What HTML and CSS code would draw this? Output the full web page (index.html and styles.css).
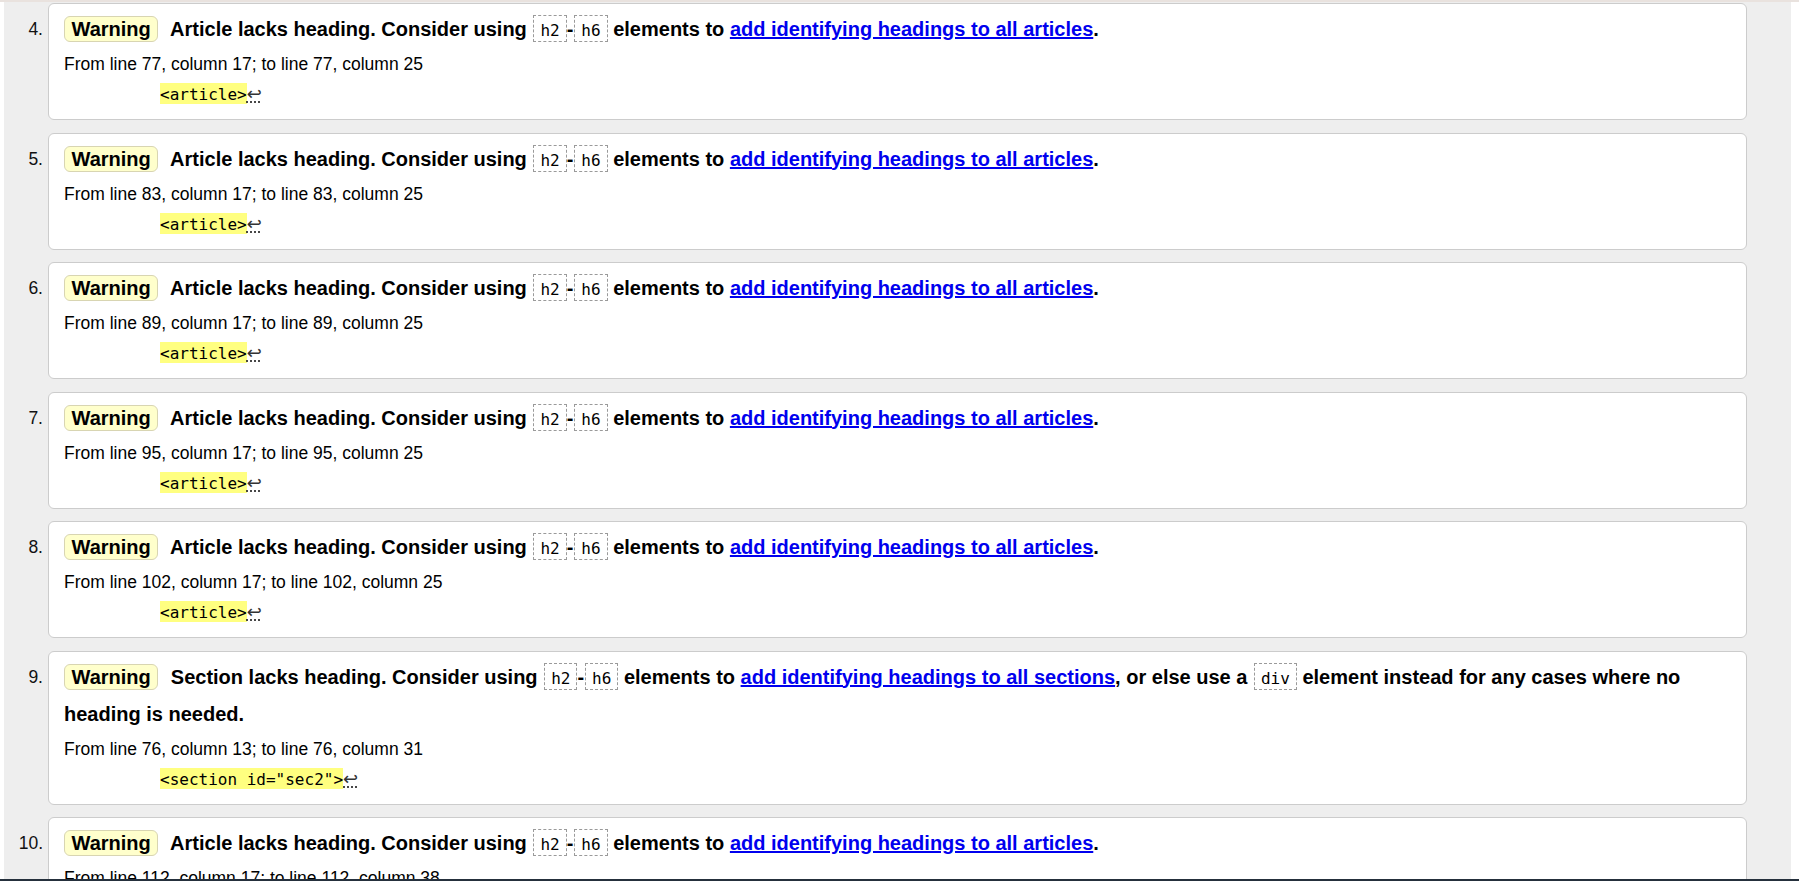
FILE: index.html
```html
<!DOCTYPE html>
<html lang="en">
<head>
<meta charset="utf-8">
<title>Validation results</title>
<link rel="stylesheet" href="styles.css">
</head>
<body>
<div class="topline"></div>
<div class="viewport">
  <main class="results">
    <ol class="msgs">
      <li class="msg">
        <span class="num">4.</span>
        <div class="card">
          <p class="title"><strong class="badge">Warning</strong> <span>Article lacks heading. Consider using <code class="tag">h2</code>-<code class="tag">h6</code> elements to <a href="#">add identifying headings to all articles</a>.</span></p>
          <p class="loc">From line 77, column 17; to line 77, column 25</p>
          <p class="extract"><code><mark>&lt;article&gt;</mark><span class="lf">↩</span></code></p>
        </div>
      </li>
      <li class="msg">
        <span class="num">5.</span>
        <div class="card">
          <p class="title"><strong class="badge">Warning</strong> <span>Article lacks heading. Consider using <code class="tag">h2</code>-<code class="tag">h6</code> elements to <a href="#">add identifying headings to all articles</a>.</span></p>
          <p class="loc">From line 83, column 17; to line 83, column 25</p>
          <p class="extract"><code><mark>&lt;article&gt;</mark><span class="lf">↩</span></code></p>
        </div>
      </li>
      <li class="msg">
        <span class="num">6.</span>
        <div class="card">
          <p class="title"><strong class="badge">Warning</strong> <span>Article lacks heading. Consider using <code class="tag">h2</code>-<code class="tag">h6</code> elements to <a href="#">add identifying headings to all articles</a>.</span></p>
          <p class="loc">From line 89, column 17; to line 89, column 25</p>
          <p class="extract"><code><mark>&lt;article&gt;</mark><span class="lf">↩</span></code></p>
        </div>
      </li>
      <li class="msg">
        <span class="num">7.</span>
        <div class="card">
          <p class="title"><strong class="badge">Warning</strong> <span>Article lacks heading. Consider using <code class="tag">h2</code>-<code class="tag">h6</code> elements to <a href="#">add identifying headings to all articles</a>.</span></p>
          <p class="loc">From line 95, column 17; to line 95, column 25</p>
          <p class="extract"><code><mark>&lt;article&gt;</mark><span class="lf">↩</span></code></p>
        </div>
      </li>
      <li class="msg">
        <span class="num">8.</span>
        <div class="card">
          <p class="title"><strong class="badge">Warning</strong> <span>Article lacks heading. Consider using <code class="tag">h2</code>-<code class="tag">h6</code> elements to <a href="#">add identifying headings to all articles</a>.</span></p>
          <p class="loc">From line 102, column 17; to line 102, column 25</p>
          <p class="extract"><code><mark>&lt;article&gt;</mark><span class="lf">↩</span></code></p>
        </div>
      </li>
      <li class="msg">
        <span class="num">9.</span>
        <div class="card">
          <p class="title"><strong class="badge">Warning</strong> <span>Section lacks heading. Consider using <code class="tag">h2</code>-<code class="tag">h6</code> elements to <a href="#">add identifying headings to all sections</a>, or else use a <code class="tag">div</code> element instead for any cases where no heading is needed.</span></p>
          <p class="loc">From line 76, column 13; to line 76, column 31</p>
          <p class="extract"><code><mark>&lt;section id="sec2"&gt;</mark><span class="lf">↩</span></code></p>
        </div>
      </li>
      <li class="msg">
        <span class="num">10.</span>
        <div class="card">
          <p class="title"><strong class="badge">Warning</strong> <span>Article lacks heading. Consider using <code class="tag">h2</code>-<code class="tag">h6</code> elements to <a href="#">add identifying headings to all articles</a>.</span></p>
          <p class="loc">From line 112, column 17; to line 112, column 38</p>
          <p class="extract"><code><mark>&lt;article class="card"&gt;</mark><span class="lf">↩</span></code></p>
        </div>
      </li>
    </ol>
  </main>
</div>
<div class="bottomline"></div>
</body>
</html>
```
FILE: styles.css
```css
html, body {
  margin: 0;
  padding: 0;
}
body {
  height: 881px;
  display: flex;
  flex-direction: column;
  overflow: hidden;
  background: #fff;
  color: #000;
  font-family: "Liberation Sans", Arial, sans-serif;
}
.topline {
  flex: none;
  height: 2px;
  background: #e9e2de;
}
.viewport {
  flex: 1;
  min-height: 0;
  display: flex;
  overflow: hidden;
}
.results {
  margin-left: 4px;
  width: 1787px;
  background: #eeeeee;
  padding-top: 1px;
  overflow: hidden;
}
.bottomline {
  flex: none;
  height: 2px;
  background: #25303c;
}
.msgs {
  list-style: none;
  margin: 0;
  padding: 0;
}
.msg {
  display: flex;
  align-items: flex-start;
  margin-bottom: 12.5px;
}
.num {
  flex: none;
  width: 39px;
  text-align: right;
  font-size: 17.5px;
  line-height: 37px;
  padding-top: 8px;
  color: #111;
}
.card {
  margin-left: 5px;
  width: 1699px;
  box-sizing: border-box;
  background: #fff;
  border: 1px solid #cccccc;
  border-radius: 6px;
  padding: 7px 15px 13px 15px;
}
.title {
  margin: 0;
  font-size: 20px;
  font-weight: bold;
  line-height: 37px;
}
.badge {
  display: inline-block;
  background: #ffffcc;
  border: 1px solid #d8d5b2;
  border-radius: 6px;
  padding: 0 6.5px;
  line-height: 24px;
  margin-right: 7px;
}
.title a {
  color: #0000ee;
  text-decoration: underline;
}
.tag {
  font-family: "DejaVu Sans Mono", "Liberation Mono", monospace;
  font-size: 16px;
  font-weight: normal;
  line-height: 1;
  border: 1px dashed #9a9a9a;
  padding: 5px 6px 1px;
  margin-left: 1px;
}
.loc {
  margin: 5px 0 0;
  font-size: 17.5px;
  line-height: 22px;
}
.extract {
  margin: 9px 0 0;
  padding-left: 96px;
  font-size: 16px;
  line-height: 22px;
}
.extract code {
  font-family: "DejaVu Sans Mono", "Liberation Mono", monospace;
  font-size: 16px;
  line-height: 1;
}
.extract mark {
  background: #ffff80;
  color: #000;
  padding-top: 2px;
  line-height: 1;
}
.lf {
  font-family: "DejaVu Sans", sans-serif;
  font-size: 18px;
  line-height: 1;
  color: #333;
  text-decoration: underline dotted #333;
  text-underline-offset: 2px;
}
```
